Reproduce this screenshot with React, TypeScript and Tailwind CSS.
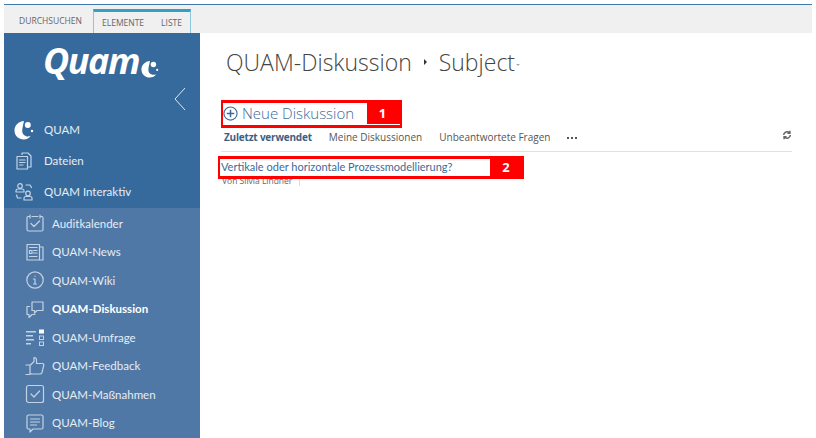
import type { ReactNode } from 'react';

const stroke = {
  fill: 'none',
  stroke: 'currentColor',
  strokeWidth: 1.2,
  strokeLinecap: 'round' as const,
  strokeLinejoin: 'round' as const,
};

function Icon({ children }: { children: ReactNode }) {
  return (
    <svg viewBox="0 0 20 20" className="h-[20px] w-[20px] shrink-0 text-[#c3d3e4]" {...stroke}>
      {children}
    </svg>
  );
}

const MoonMark = ({ className }: { className: string }) => (
  <svg viewBox="0 0 20 20" className={className}>
    <path d="M10 1C4.500 1.500 0.500 5.300 0.500 10.500 0.500 15.800 4.800 19.500 9.800 19.500c3 0 5.500-1.300 7-3.700-1.500.7-3.200.9-4.800.4C9.500 15.400 8 13.200 8.200 10.500 8.400 7 9.500 3.500 10 1z" fill="#fff" />
    <circle cx="13.800" cy="5" r="3" fill="#fff" />
    <circle cx="18" cy="11" r="1.200" fill="#fff" />
  </svg>
);

const topNav = [
  {
    label: 'QUAM',
    icon: <MoonMark className="h-[20px] w-[20px] shrink-0" />,
  },
  {
    label: 'Dateien',
    icon: (
      <Icon>
        <path d="M8 3.500V2h6l3 3v11h-3M3 5.500h10.500V18H3zM5.500 9h5.500M5.500 11.500h5.500M5.500 14h3.500" />
      </Icon>
    ),
  },
  {
    label: 'QUAM Interaktiv',
    icon: (
      <Icon>
        <circle cx="6" cy="4" r="2.300" />
        <path d="M2 10V8.500C2 7.500 3 7 4 7h4c1 0 2 .5 2 1.500V10z" />
        <circle cx="14" cy="11.500" r="2.300" />
        <path d="M10 18v-2c0-1 1-1.500 2-1.500h4c1 0 2 .5 2 1.500v2zM12 3h4l1.500 2.500M2.500 13l1 3H7" />
      </Icon>
    ),
  },
];

const subNav = [
  {
    label: 'Auditkalender',
    icon: (
      <Icon>
        <path d="M5 3.500H3a1.500 1.500 0 0 0-1 1.500v11.500A1.500 1.500 0 0 0 3.500 18h13a1.500 1.500 0 0 0 1.500-1.500V5a1.500 1.500 0 0 0-1-1.500h-2M5 2v3M15 2v3M7 3.500h6M6 10.500l3 3 5.500-5.500" />
      </Icon>
    ),
  },
  {
    label: 'QUAM-News',
    icon: (
      <Icon>
        <path d="M2 2.500h12.500V18H2zM14.500 5H18v13h-3.500M4.500 5.500h7.500M8.500 8.500h3.500M8.500 11h3.500M4.500 14.500h7.500M4.500 8.500h2.500V11.500H4.500z" />
      </Icon>
    ),
  },
  {
    label: 'QUAM-Wiki',
    icon: (
      <Icon>
        <circle cx="10" cy="10" r="8.200" />
        <path d="M8.500 9h1.500v5M8.500 14h3M10 6v.2" />
      </Icon>
    ),
  },
  {
    label: 'QUAM-Diskussion',
    active: true,
    icon: (
      <Icon>
        <path d="M7 3h11v8.500h-6L9.500 14v-2.500H7zM4.500 7.500H2v8h2V18.500l3-3h3" />
      </Icon>
    ),
  },
  {
    label: 'QUAM-Umfrage',
    icon: (
      <svg viewBox="0 0 20 20" className="h-[20px] w-[20px] shrink-0 text-[#c3d3e4]">
        <path d="M1 4h10v1.500H1zM1 8h7v1.500H1zM1 12h8v1.500H1zM1 16h5v1.500H1z" fill="currentColor" />
        <rect x="14" y="2.500" width="5" height="4" fill="#fff" />
        <rect x="14.500" y="9" width="4" height="3.500" fill="none" stroke="currentColor" />
        <rect x="14.500" y="15" width="4" height="3.500" fill="none" stroke="currentColor" />
      </svg>
    ),
  },
  {
    label: 'QUAM-Feedback',
    icon: (
      <Icon>
        <path d="M1 9h4v9.500H1M5 9.500 9 5.500V1.500c1.500 0 2.500 1 2.500 2.500v3.500h6c1 0 1.500 1 1.200 2l-1.700 7c-.3 1-1 1.500-2 1.500H8c-1.500 0-3-.5-3-.5" />
      </Icon>
    ),
  },
  {
    label: 'QUAM-Maßnahmen',
    icon: (
      <Icon>
        <rect x="1.500" y="1.500" width="17" height="17" rx="2" />
        <path d="M6 10l3 3 5.500-6" />
      </Icon>
    ),
  },
  {
    label: 'QUAM-Blog',
    icon: (
      <Icon>
        <path d="M3.500 2h13A1.500 1.500 0 0 1 18 3.500v11a1.500 1.500 0 0 1-1.500 1.500H8l-3 3v-3H3.500A1.500 1.500 0 0 1 2 14.500v-11A1.500 1.500 0 0 1 3.500 2zM5.500 6h9M5.500 9h9M5.500 12h6" />
      </Icon>
    ),
  },
];

function Sidebar() {
  return (
    <aside className="flex w-[196px] shrink-0 flex-col bg-[#376a9c] text-[#e6edf4]">
      <div className="relative h-[81px] shrink-0 pl-[39px] pt-[6px]">
        <div className="flex items-end">
          <span className="font-['Open_Sans',sans-serif] text-[36px] font-bold italic leading-[44px] tracking-[-1.500px] text-white">Quam</span>
          <MoonMark className="mb-[5px] ml-[2px] h-[18px] w-[18px]" />
        </div>
        <svg viewBox="0 0 12 24" className="absolute right-[14px] top-[54px] h-[24px] w-[12px] text-[#dfe8f1]" fill="none" stroke="currentColor">
          <path d="M11 1 1 12l10 11" />
        </svg>
      </div>
      <nav className="flex flex-col">
        {topNav.map((item) => (
          <div key={item.label} className="flex h-[31px] items-center gap-[10px] pl-[10px] text-[11.500px]">
            {item.icon}
            <span>{item.label}</span>
          </div>
        ))}
      </nav>
      <nav className="mt-[1px] flex flex-1 flex-col bg-[#4f78a6] pt-[1px]">
        {subNav.map((item) => (
          <div
            key={item.label}
            className={`flex h-[28.500px] items-center gap-[7px] pl-[21px] text-[11.500px] ${item.active ? 'font-bold text-white' : ''}`}
          >
            {item.icon}
            <span>{item.label}</span>
          </div>
        ))}
      </nav>
    </aside>
  );
}

export default function App() {
  return (
    <div className="relative flex h-[438px] w-[816px] flex-col overflow-hidden bg-white px-[4px] pt-[4px] font-['Lato',sans-serif]">
      <div className="h-[1px] shrink-0 bg-[#3f78ab]" />
      <div className="flex h-[28px] shrink-0 items-end bg-[#f0f0f0] font-['Open_Sans',sans-serif] text-[8.500px] text-[#666]">
        <div className="flex h-[23px] w-[89px] items-center justify-center pl-[4px]">DURCHSUCHEN</div>
        <div className="flex h-[24px] w-[98px] items-center justify-between border-x border-[#8cc8dc] border-t-[3px] border-t-[#32a0c4] px-[8px] pt-[1px]">
          <span>ELEMENTE</span>
          <span>LISTE</span>
        </div>
      </div>
      <div className="flex min-h-0 flex-1">
        <Sidebar />
        <main className="min-w-0 flex-1 pl-[21px] pr-[20px]">
          <h1 className="mt-[12px] flex h-[34px] items-center pl-[5px] font-['Open_Sans',sans-serif] text-[23px] font-light leading-none text-[#444]">
            <span>QUAM-Diskussion</span>
            <span className="mx-[12px] h-0 w-0 border-y-[3px] border-l-[3px] border-y-transparent border-l-[#333]" />
            <span>Subject</span>
            <span className="ml-[1px] mt-[6px] h-0 w-0 border-x-[2px] border-t-[2px] border-x-transparent border-t-[#aaa]" />
          </h1>
          <div className="mt-[21px] flex h-[26px] items-center pl-[2px] text-[#3d6a9a]">
            <svg viewBox="0 0 16 16" className="h-[15px] w-[15px] shrink-0" fill="none" stroke="currentColor" strokeWidth="1.200">
              <circle cx="8" cy="8" r="7" />
              <path d="M8 4v8M4 8h8" strokeWidth="1.600" />
            </svg>
            <span className="ml-[4px] font-['Open_Sans',sans-serif] text-[15px] font-light">Neue Diskussion</span>
          </div>
          <div className="mt-[1px] flex h-[21px] items-center gap-[17px] pl-[3px] font-['Open_Sans',sans-serif] text-[10px] text-[#555]">
            <span className="font-bold tracking-[-0.2px] text-[#3d5f85]">Zuletzt verwendet</span>
            <span>Meine Diskussionen</span>
            <span>Unbeantwortete Fragen</span>
            <span className="flex gap-[2px]">
              <span className="h-[2px] w-[2px] bg-[#555]" />
              <span className="h-[2px] w-[2px] bg-[#555]" />
              <span className="h-[2px] w-[2px] bg-[#555]" />
            </span>
            <svg viewBox="0 0 12 12" className="ml-auto h-[10px] w-[10px] -translate-y-[3px] text-[#666]" fill="none" stroke="currentColor" strokeWidth="1.800">
              <path d="M2 6a4 4 0 0 1 7-2.500M10 6a4 4 0 0 1-7 2.500M9.500 1v3h-3M2.500 11V8h3" />
            </svg>
          </div>
          <div className="mt-[3px] h-[1px] bg-[#e1e1e1]" />
          <div className="mt-[6px] text-[11px] leading-[17px] text-[#3d6a9a]">
            Vertikale oder horizontale Prozessmodellierung?
          </div>
          <div className="flex h-[13px] items-center pl-[1px] font-['Open_Sans',sans-serif] text-[8.500px] text-[#666]">
            <span>Von Silvia Lindner</span>
            <span className="ml-[7px] h-[9px] w-[1px] bg-[#ddd]" />
          </div>
        </main>
      </div>

      {/* annotation boxes drawn over the page */}
      <div className="absolute left-[221px] top-[100px] flex h-[28px] w-[181px] border-y-[3px] border-l-[2px] border-[#f00]">
        <div className="flex-1" />
        <div className="relative flex w-[35px] items-center justify-center bg-[#f00] pr-[4px] font-['Open_Sans',sans-serif] text-[13px] font-bold text-white">
          1
          <span className="absolute bottom-0 left-0 right-[2px] h-[1px] bg-white" />
        </div>
      </div>
      <div className="absolute left-[218px] top-[156px] flex h-[23px] w-[306px] border-y-[3px] border-l-[2px] border-[#f00]">
        <div className="flex-1" />
        <div className="flex w-[34px] items-center justify-center bg-[#f00] pr-[2px] font-['Open_Sans',sans-serif] text-[13px] font-bold text-white">2</div>
      </div>
    </div>
  );
}
